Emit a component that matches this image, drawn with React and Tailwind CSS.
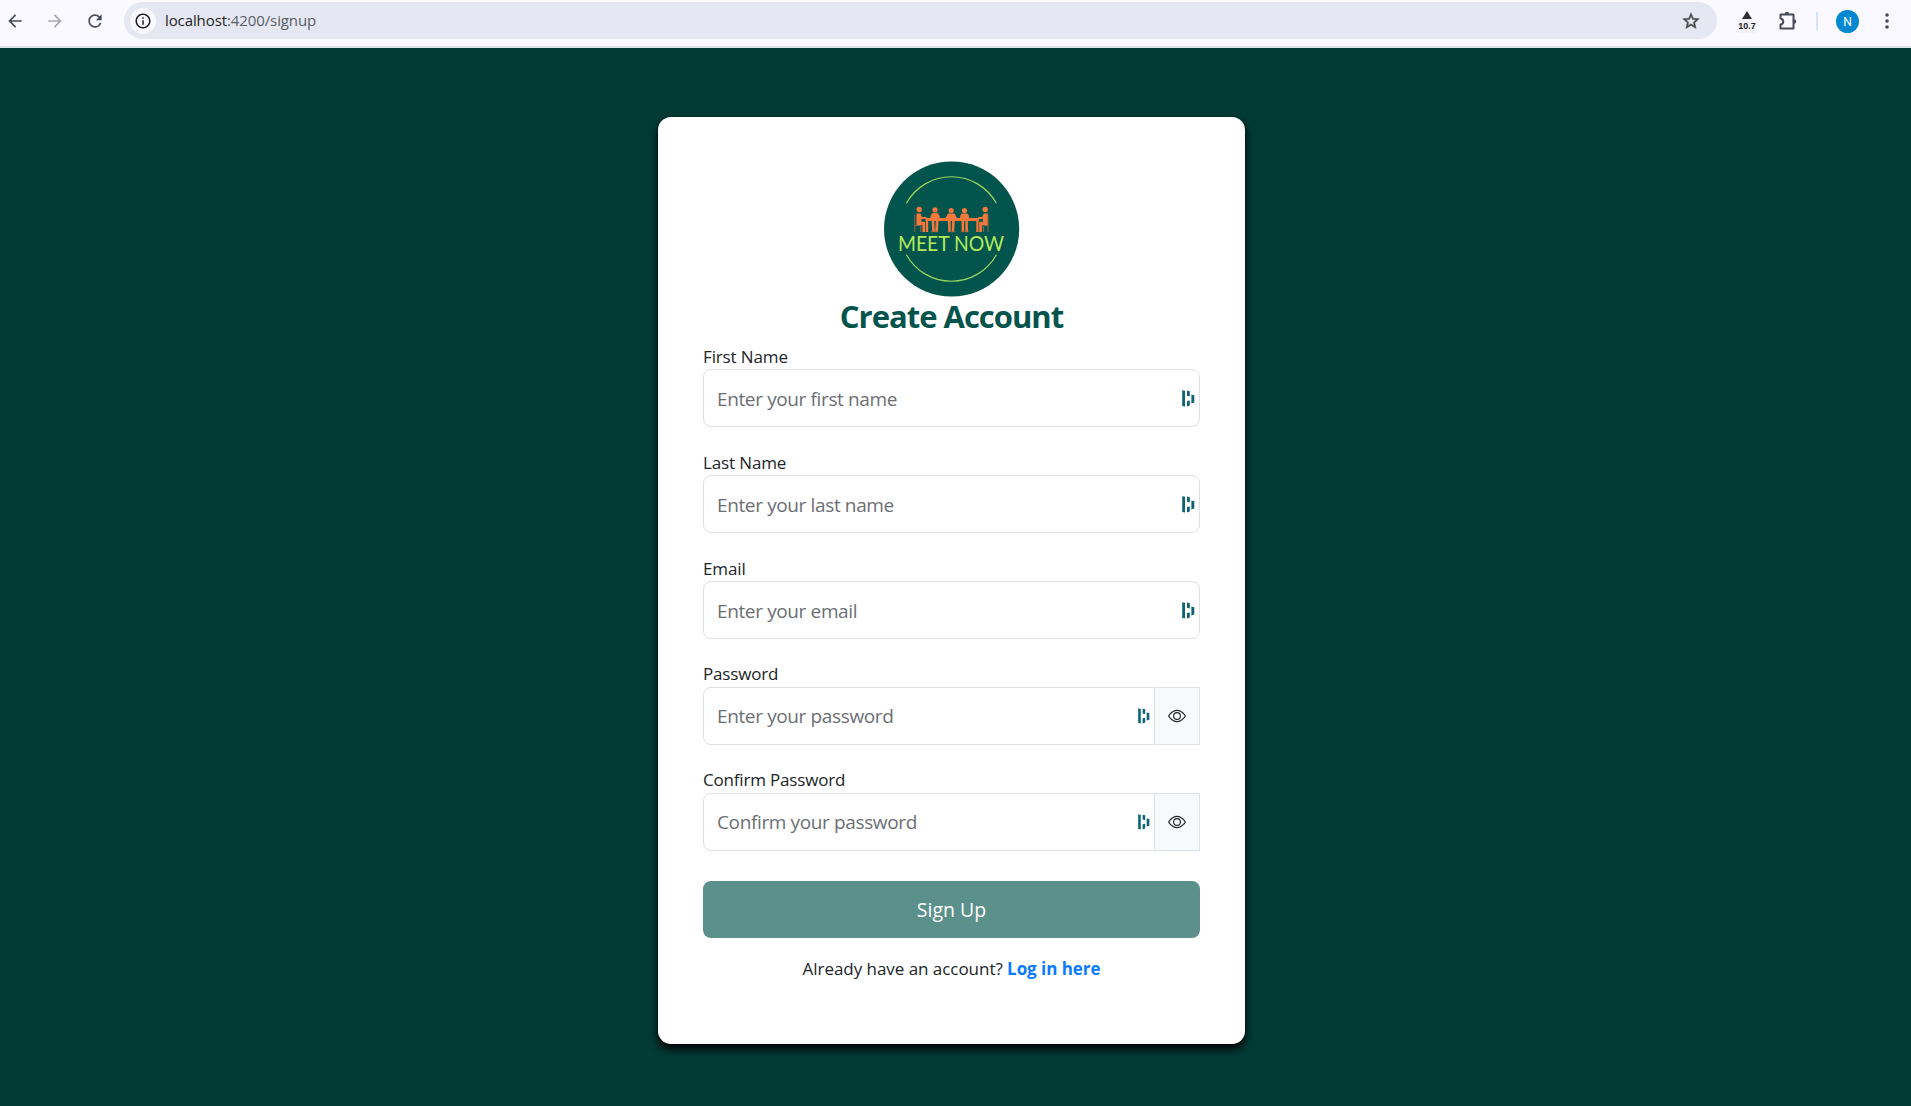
import { MdArrowBack, MdArrowForward, MdInfoOutline, MdRefresh, MdStarOutline } from 'react-icons/md';
import { BsEye } from 'react-icons/bs';

function PuzzleIcon() {
  return (
    <svg width="20" height="20" viewBox="0 0 20 20" fill="none" stroke="#474b5c" strokeWidth="2" strokeLinejoin="round">
      <path d="M2.500 3.500H15.500V17.500H2.500V13.600C4.200 13.400 5.200 12.200 5.200 10.500S4.200 7.600 2.500 7.400z" />
      <path d="M6.800 3a2.200 2.200 0 0 1 4.400 0zM16 8.300a2.200 2.200 0 0 1 0 4.400z" fill="#474b5c" stroke="none" />
    </svg>
  );
}

function BrowserBar() {
  return (
    <header className="flex h-12 shrink-0 border-b-2 border-[#dfe3ea] bg-[#faf9ff] text-[#474b5c]">
      <div className="flex h-[41px] w-full items-center">
        <div className="flex w-[124px] shrink-0 gap-5 pl-[5px]">
          <MdArrowBack size={20} />
          <MdArrowForward size={20} className="text-[#a9a9ad]" />
          <MdRefresh size={20} />
        </div>
        <div className="flex h-[37px] w-[1593px] shrink-0 items-center rounded-full bg-[#e5e8f3] pr-4 pl-1.5">
          <div className="flex size-[26px] items-center justify-center rounded-full bg-[#faf9ff]">
            <MdInfoOutline size={18} className="text-[#1f1f1f]" />
          </div>
          <div className="mb-0.5 ml-[9px] text-[15px] leading-5 tracking-[-0.1px] text-[#5a5c62]">
            <span className="text-[#1f1f1f]">localhost</span>:4200/signup
          </div>
          <MdStarOutline size={20} stroke="currentColor" strokeWidth={0.5} className="ml-auto text-[#474747]" />
        </div>
        <div className="ml-[20px] flex w-5 flex-col items-center pt-[3px]">
          <svg width="10" height="8" viewBox="0 0 10 8">
            <path d="M5 0l5 8H0z" fill="#2f2f2f" />
          </svg>
          <span className="mt-px rounded-[3px] bg-[#f4f3f7] px-px font-['Liberation_Sans'] text-[9px] leading-[13px] font-bold text-[#222]">
            10.7
          </span>
        </div>
        <div className="ml-[21px]">
          <PuzzleIcon />
        </div>
        <div className="ml-[18px] h-[18px] w-0.5 bg-[#d3e3fd]" />
        <div className="mt-[2px] ml-[18px] flex size-[23px] items-center justify-center rounded-full bg-[#0288d1] font-[Roboto] text-[12px] text-white">
          N
        </div>
        <svg className="ml-[25.500px]" width="4" height="18" viewBox="0 0 4 18" fill="#474b5c">
          <circle cx="2" cy="3" r="1.800" />
          <circle cx="2" cy="9" r="1.800" />
          <circle cx="2" cy="15" r="1.800" />
        </svg>
      </div>
    </header>
  );
}

function Logo() {
  return (
    <svg className="mx-auto" width="136" height="136" viewBox="0 0 136 136">
      <circle cx="67.600" cy="68" r="67.600" fill="#03544d" />
      <g fill="none" stroke="#9bd65c" strokeWidth="1.200">
        <path d="M22.400 42.300A51.400 51.400 0 0 1 112.400 42.300" />
        <path d="M22.400 93.700A51.400 51.400 0 0 0 112.400 93.700" />
      </g>
      <g transform="translate(-0.5 0)">
        <g fill="#f4773b">
          <circle cx="35.700" cy="48.500" r="2.700" />
          <circle cx="51.500" cy="48.900" r="2.600" />
          <circle cx="67.700" cy="49.500" r="2.600" />
          <circle cx="81" cy="49.500" r="2.600" />
          <circle cx="101.700" cy="48.500" r="2.700" />
          <path d="M42 57H95.500V60H42z" />
          <path d="M42.500 59h2.200v12h-2.200zM92.800 59h2.200v12h-2.200z" />
          <path d="M46.700 58c0-4 1.500-6 3-6h3.600c1.500 0 3.200 2 3.200 6zM61.500 58l3-5.500h6.600l3 5.500zM76.500 58c0-4 1.200-5.500 2.700-5.500h3.600c1.500 0 3 1.500 3 5.500z" />
          <path d="M48.200 60h2.600l.6 11h-2.700zM52.400 60h2.600l-.6 11h-2.700zM64.300 60h2.800l.2 11h-2.500zM68.500 60h2.800l-.6 11h-2.500zM78 60h2.600v11h-2.500zM81.700 60h2.600l.2 11h-2.600z" />
          <path d="M33 52.500h4l1.500 3.500H43v2h-5v2.800h3.800V71h-2.900v-7H33z" />
          <path d="M104.300 52.500h-4L98.800 56H94.500v2h5v2.800h-3.800V71h2.900v-7h5.700z" />
        </g>
        <path d="M31.300 54v17M31.300 64.500h6v6.500M104.600 54v17M104.600 64.500h-4.500v6.500" fill="none" stroke="#a06843" strokeWidth="0.900" />
        <path d="M47.500 70.800h7.500M64 70.800h8M77.300 70.800h8" stroke="#a06843" strokeWidth="0.800" />
      </g>
      <text x="14" y="90" textLength="106" lengthAdjust="spacingAndGlyphs" className="font-[Lato] text-[21.500px]" fontWeight="400" fill="#b3ea5c">
        MEET NOW
      </text>
    </svg>
  );
}

function ManagerIcon({ small }) {
  return (
    <svg width={small ? 12 : 13} height={small ? 16 : 17} viewBox="0 0 13 17" fill="#0e6276">
      <path d="M.2.200 3 .800v15.800l-2.800-.6zM5 .600l2.800.6V6.400L5 5.800zM5 11l2.800-.6v5.200l-2.800.9zM9.400 4.600l2.900.6v7.400l-2.900.9z" />
    </svg>
  );
}

function Field({ label, placeholder, secret }) {
  return (
    <div>
      <label
        className={
          secret
            ? 'block h-6 text-[17px] leading-[22px] tracking-[-0.18px] text-[#212529]'
            : 'block h-6 text-[17px] leading-6 tracking-[-0.13px] text-[#212529]'
        }
      >
        {label}
      </label>
      <div className="flex h-[58px]">
        <div
          className={
            secret
              ? 'flex flex-1 items-center rounded-l-lg border border-[#dee0e2] pr-1 pl-[13px]'
              : 'flex flex-1 items-center rounded-lg border border-[#dee0e2] pr-1 pl-[13px]'
          }
        >
          <span
            className={
              secret
                ? 'flex-1 text-[19px] leading-[30px] tracking-[-0.37px] text-[#6b6f74]'
                : 'flex-1 pt-0.5 text-[19px] leading-[30px] tracking-[-0.37px] text-[#6b6f74]'
            }
          >
            {placeholder}
          </span>
          <ManagerIcon small={secret} />
        </div>
        {secret && (
          <div className="flex w-[45px] items-center justify-center border border-l-0 border-[#dee2e6] bg-[#f8f9fa]">
            <BsEye size={18} className="text-[#212529]" />
          </div>
        )}
      </div>
    </div>
  );
}

const fields = [
  { label: 'First Name', placeholder: 'Enter your first name' },
  { label: 'Last Name', placeholder: 'Enter your last name' },
  { label: 'Email', placeholder: 'Enter your email' },
  { label: 'Password', placeholder: 'Enter your password', secret: true },
  { label: 'Confirm Password', placeholder: 'Confirm your password', secret: true },
];

export default function App() {
  return (
    <div className="flex h-[1106px] w-[1911px] flex-col overflow-hidden bg-[#023a36] font-['Open_Sans','Noto_Sans',sans-serif]">
      <BrowserBar />
      <main className="flex flex-1 justify-center pt-[69px] pr-2">
        <section className="h-[927px] w-[587px] rounded-[13px] bg-white px-[45px] pt-11 shadow-[0_5px_8px_#000]">
          <Logo />
          <h1 className="mb-[10px] text-center text-[31px] leading-[38px] font-bold tracking-[-1px] text-[#03544d]">Create Account</h1>
          <div className="flex flex-col gap-6">
            {fields.map((f) => (
              <Field key={f.label} {...f} />
            ))}
          </div>
          <button className="mt-[30px] block h-[57px] w-full rounded-lg bg-[#5c908b] text-[19.500px] font-medium text-white">Sign Up</button>
          <p className="mt-[19px] text-center text-[17px] leading-6 tracking-[-0.04px] text-[#212529]">
            Already have an account? <a className="font-bold tracking-[-0.05px] text-[#0a7aff]">Log in here</a>
          </p>
        </section>
      </main>
    </div>
  );
}
